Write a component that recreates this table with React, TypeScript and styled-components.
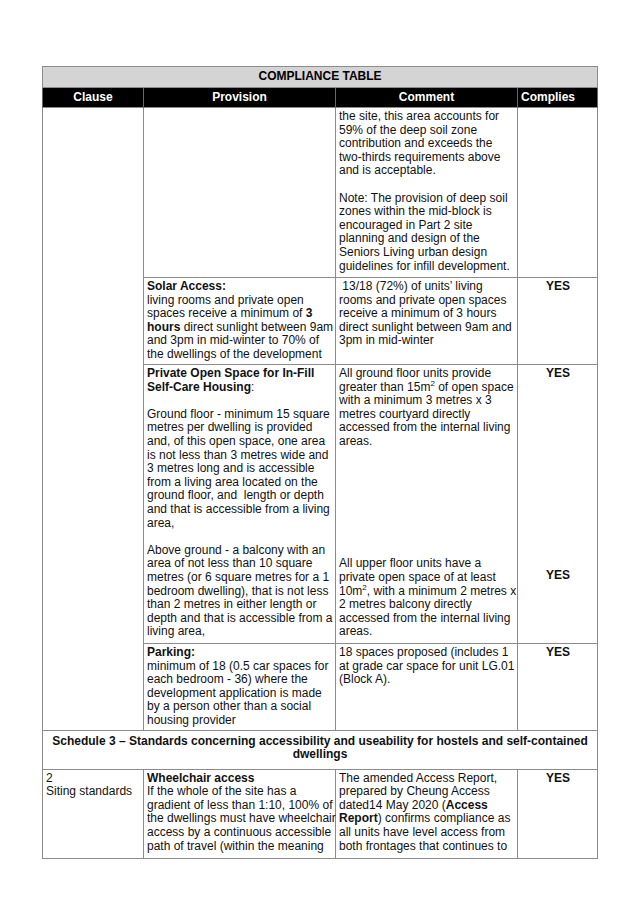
import styled, { createGlobalStyle } from 'styled-components';

const LINE = 13.6;

const GlobalStyle = createGlobalStyle`
  body {
    margin: 0;
    background: #fff;
  }
`;

const Page = styled.div`
  padding: 66px 0 40px 42px;
  font-family: 'Liberation Sans', Arial, sans-serif;
  font-size: 12px;
  line-height: ${LINE}px;
  color: #111;
`;

const Table = styled.table`
  border-collapse: collapse;
  table-layout: fixed;
  width: 555px;
`;

const TitleCell = styled.th`
  background: #d4d4d4;
  border: 1px solid #8c8c8c;
  height: 20px;
  padding: 0;
  font-weight: bold;
  text-align: center;
  color: #000;
`;

const HeadCell = styled.th<{ $left?: boolean }>`
  background: #000;
  color: #fff;
  height: 19px;
  padding: 0 3px;
  font-weight: bold;
  text-align: ${(p) => (p.$left ? 'left' : 'center')};
  border-left: 1px solid #666;
  border-right: 1px solid #666;
`;

const Row = styled.tr<{ $h: number }>`
  height: ${(p) => p.$h}px;
`;

const Cell = styled.td`
  vertical-align: top;
  padding: 2px 2px 2px 3px;
  border: 1px solid #8c8c8c;
  white-space: nowrap;
`;

const YesCell = styled(Cell)`
  text-align: center;
  font-weight: bold;
`;

const BannerCell = styled(Cell)`
  padding: 4px 3px 6px;
  text-align: center;
  font-weight: bold;
`;

const Para = styled.div<{ $gap?: number }>`
  margin-top: ${(p) => p.$gap ?? 0}px;
`;

const Sup = styled.sup`
  font-size: 8px;
  line-height: 0;
  vertical-align: 5px;
`;

export default function App() {
  return (
    <Page>
      <GlobalStyle />
      <Table>
        <colgroup>
          <col style={{ width: 101 }} />
          <col style={{ width: 192 }} />
          <col style={{ width: 182 }} />
          <col style={{ width: 80 }} />
        </colgroup>
        <thead>
          <tr>
            <TitleCell colSpan={4}>COMPLIANCE TABLE</TitleCell>
          </tr>
          <tr>
            <HeadCell>Clause</HeadCell>
            <HeadCell>Provision</HeadCell>
            <HeadCell>Comment</HeadCell>
            <HeadCell $left>Complies</HeadCell>
          </tr>
        </thead>
        <tbody>
          <Row $h={170}>
            <Cell rowSpan={4} />
            <Cell />
            <Cell>
              <Para>
                the site, this area accounts for
                <br />
                59% of the deep soil zone
                <br />
                contribution and exceeds the
                <br />
                two-thirds requirements above
                <br />
                and is acceptable.
              </Para>
              <Para $gap={LINE}>
                Note: The provision of deep soil
                <br />
                zones within the mid-block is
                <br />
                encouraged in Part 2 site
                <br />
                planning and design of the
                <br />
                Seniors Living urban design
                <br />
                guidelines for infill development.
              </Para>
            </Cell>
            <Cell />
          </Row>

          <Row $h={87}>
            <Cell>
              <b>Solar Access:</b>
              <br />
              living rooms and private open
              <br />
              spaces receive a minimum of <b>3</b>
              <br />
              <b>hours</b> direct sunlight between 9am
              <br />
              and 3pm in mid-winter to 70% of
              <br />
              the dwellings of the development
            </Cell>
            <Cell>
              {'\u00a0'}13/18 (72%) of units’ living
              <br />
              rooms and private open spaces
              <br />
              receive a minimum of 3 hours
              <br />
              direct sunlight between 9am and
              <br />
              3pm in mid-winter
            </Cell>
            <YesCell>YES</YesCell>
          </Row>

          <Row $h={279}>
            <Cell>
              <Para>
                <b>Private Open Space for In-Fill</b>
                <br />
                <b>Self-Care Housing</b>:
              </Para>
              <Para $gap={LINE}>
                Ground floor - minimum 15 square
                <br />
                metres per dwelling is provided
                <br />
                and, of this open space, one area
                <br />
                is not less than 3 metres wide and
                <br />
                3 metres long and is accessible
                <br />
                from a living area located on the
                <br />
                ground floor, and {'\u00a0'}length or depth
                <br />
                and that is accessible from a living
                <br />
                area,
              </Para>
              <Para $gap={LINE}>
                Above ground - a balcony with an
                <br />
                area of not less than 10 square
                <br />
                metres (or 6 square metres for a 1
                <br />
                bedroom dwelling), that is not less
                <br />
                than 2 metres in either length or
                <br />
                depth and that is accessible from a
                <br />
                living area,
              </Para>
            </Cell>
            <Cell>
              <Para>
                All ground floor units provide
                <br />
                greater than 15m<Sup>2</Sup> of open space
                <br />
                with a minimum 3 metres x 3
                <br />
                metres courtyard directly
                <br />
                accessed from the internal living
                <br />
                areas.
              </Para>
              <Para $gap={LINE * 8}>
                All upper floor units have a
                <br />
                private open space of at least
                <br />
                10m<Sup>2</Sup>, with a minimum 2 metres x
                <br />
                2 metres balcony directly
                <br />
                accessed from the internal living
                <br />
                areas.
              </Para>
            </Cell>
            <YesCell>
              <Para>YES</Para>
              <Para $gap={188}>YES</Para>
            </YesCell>
          </Row>

          <Row $h={86}>
            <Cell>
              <b>Parking:</b>
              <br />
              minimum of 18 (0.5 car spaces for
              <br />
              each bedroom - 36) where the
              <br />
              development application is made
              <br />
              by a person other than a social
              <br />
              housing provider
            </Cell>
            <Cell>
              18 spaces proposed (includes 1
              <br />
              at grade car space for unit LG.01
              <br />
              (Block A).
            </Cell>
            <YesCell>YES</YesCell>
          </Row>

          <Row $h={39}>
            <BannerCell colSpan={4}>
              Schedule 3 – Standards concerning accessibility and useability for hostels and
              self-contained
              <br />
              dwellings
            </BannerCell>
          </Row>

          <Row $h={89}>
            <Cell>
              2
              <br />
              Siting standards
            </Cell>
            <Cell>
              <b>Wheelchair access</b>
              <br />
              If the whole of the site has a
              <br />
              gradient of less than 1:10, 100% of
              <br />
              the dwellings must have wheelchair
              <br />
              access by a continuous accessible
              <br />
              path of travel (within the meaning
            </Cell>
            <Cell>
              The amended Access Report,
              <br />
              prepared by Cheung Access
              <br />
              dated14 May 2020 (<b>Access</b>
              <br />
              <b>Report</b>) confirms compliance as
              <br />
              all units have level access from
              <br />
              both frontages that continues to
            </Cell>
            <YesCell>YES</YesCell>
          </Row>
        </tbody>
      </Table>
    </Page>
  );
}
